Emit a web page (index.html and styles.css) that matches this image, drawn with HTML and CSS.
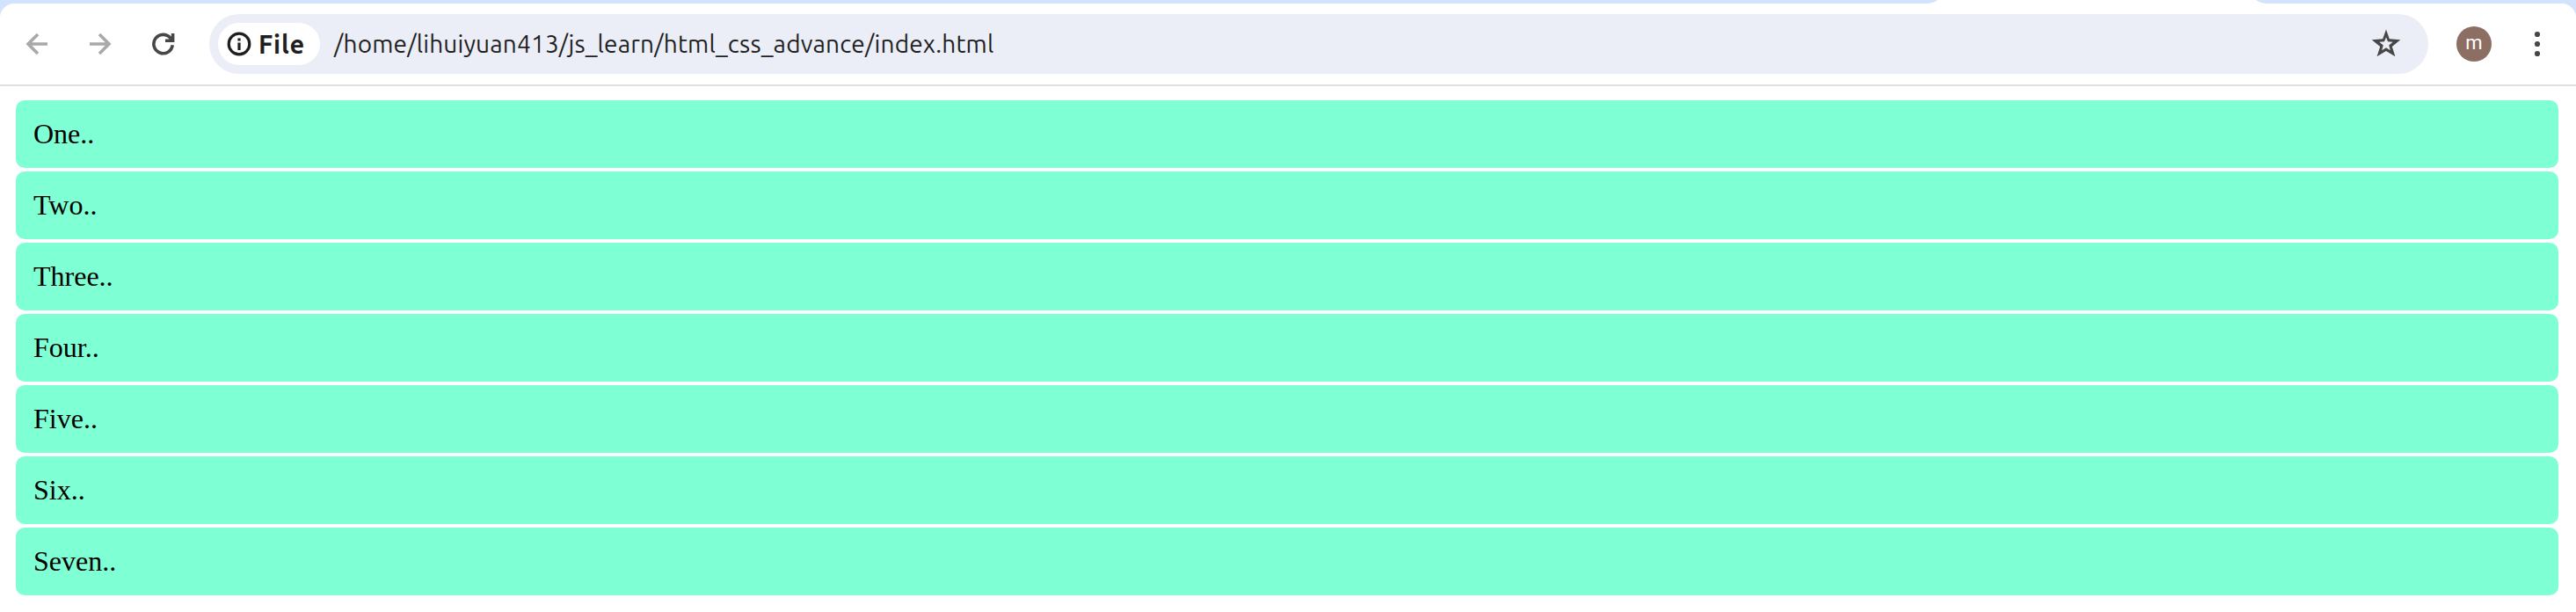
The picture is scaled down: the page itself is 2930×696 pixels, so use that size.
FILE: index.html
```html
<!DOCTYPE html>
<html lang="en">
<head>
<meta charset="utf-8">
<title>index.html</title>
<link rel="stylesheet" href="styles.css">
</head>
<body>
<header class="browser">
  <div class="tab"><svg width="390" height="4" viewBox="0 0 390 4"><path d="M0 4Q9 4 14 0H376Q381 4 390 4Z" fill="#fff"/></svg></div>
  <div class="toolbar">
    <svg class="icon" width="28" height="28" viewBox="0 0 28 28" fill="none" stroke="#a9a9a9" stroke-width="3.6"><path d="M26 14H4M15 3L4 14L15 25"/></svg>
    <svg class="icon forward" width="28" height="28" viewBox="0 0 28 28" fill="none" stroke="#a9a9a9" stroke-width="3.6"><path d="M2 14H24M13 3L24 14L13 25"/></svg>
    <svg class="icon reload" width="28" height="28" viewBox="0 0 28 28" fill="none" stroke="#474747" stroke-width="3.6"><path d="M24.2 15.2A10.7 10.7 0 1 1 21.8 7.2L24 9.6M24.6 2V10.2H16"/></svg>
    <div class="omnibox">
      <div class="chip">
        <svg width="28" height="28" viewBox="0 0 28 28"><circle cx="14" cy="14" r="11.8" fill="none" stroke="#1f1f1f" stroke-width="3.2"/><path d="M12.4 12.6H15.6V21H12.4ZM12.4 7.4H15.6V10.5H12.4Z" fill="#1f1f1f"/></svg>
        <span class="scheme">File</span>
      </div>
      <span class="url">/home/lihuiyuan413/js_learn/html_css_advance/index.html</span>
      <svg class="star" width="34" height="34" viewBox="0 0 34 34"><path fill="#474747" fill-rule="evenodd" d="M17 .5L20.8 11.3L33.3 12.2L23.8 20L27.4 31.2L17 24.9L6.6 31.2L10.2 20L.7 12.2L13.2 11.3ZM17 9.2L15 14.3L9.3 14.8L13.8 18.5L12.2 24.2L17 21.2L21.8 24.2L20.2 18.5L24.7 14.8L19 14.3Z"/></svg>
    </div>
    <div class="avatar">m</div>
    <svg class="menu" width="8" height="30" viewBox="0 0 8 30" fill="#474747"><circle cx="4" cy="4" r="3.1"/><circle cx="4" cy="15" r="3.1"/><circle cx="4" cy="26" r="3.1"/></svg>
  </div>
</header>
<main class="list">
  <div class="item">One..</div>
  <div class="item">Two..</div>
  <div class="item">Three..</div>
  <div class="item">Four..</div>
  <div class="item">Five..</div>
  <div class="item">Six..</div>
  <div class="item">Seven..</div>
</main>
</body>
</html>
```
FILE: styles.css
```css
* { box-sizing: border-box; }
body { margin: 0; background: #fff; color: #000; font-family: "Liberation Serif", serif; }
svg { display: block; flex: none; }
.browser { background: #d3e3fd; }
.tab { height: 4px; padding-left: 2190px; }
.toolbar { display: flex; align-items: center; height: 94px; padding: 0 40px 0 28px; background: #fff; border-bottom: 2px solid #e0e0e0; border-radius: 16px 16px 0 0; }
.forward { margin-left: 44px; }
.reload { margin-left: 44px; }
.omnibox { display: flex; align-items: center; width: 2524px; height: 68px; margin-left: 38px; padding: 0 31px 0 10px; background: #ebeef7; border-radius: 34px; font-family: Ubuntu, "Noto Sans", sans-serif; color: #1f1f1f; }
.chip { display: flex; align-items: center; gap: 8px; width: 116px; height: 48px; padding-left: 10px; background: #fff; border-radius: 24px; }
.scheme { font-size: 29px; line-height: 48px; font-weight: 600; letter-spacing: 0.8px; }
.url { margin-left: 16px; font-size: 28px; line-height: 48px; letter-spacing: 0.17px; white-space: nowrap; }
.star { margin-left: auto; }
.avatar { width: 40px; height: 40px; margin-left: 32px; border-radius: 50%; background: #8d6e63; color: #fff; font: 22px/37px Roboto, sans-serif; text-align: center; }
.menu { margin-left: 48px; }
.list { display: flex; flex-direction: column; gap: 4px; padding: 16px 20px 0 18px; }
.item { height: 77px; padding: 20px; background: #7fffd4; border-radius: 10px; font-size: 32px; line-height: 37px; }
```
